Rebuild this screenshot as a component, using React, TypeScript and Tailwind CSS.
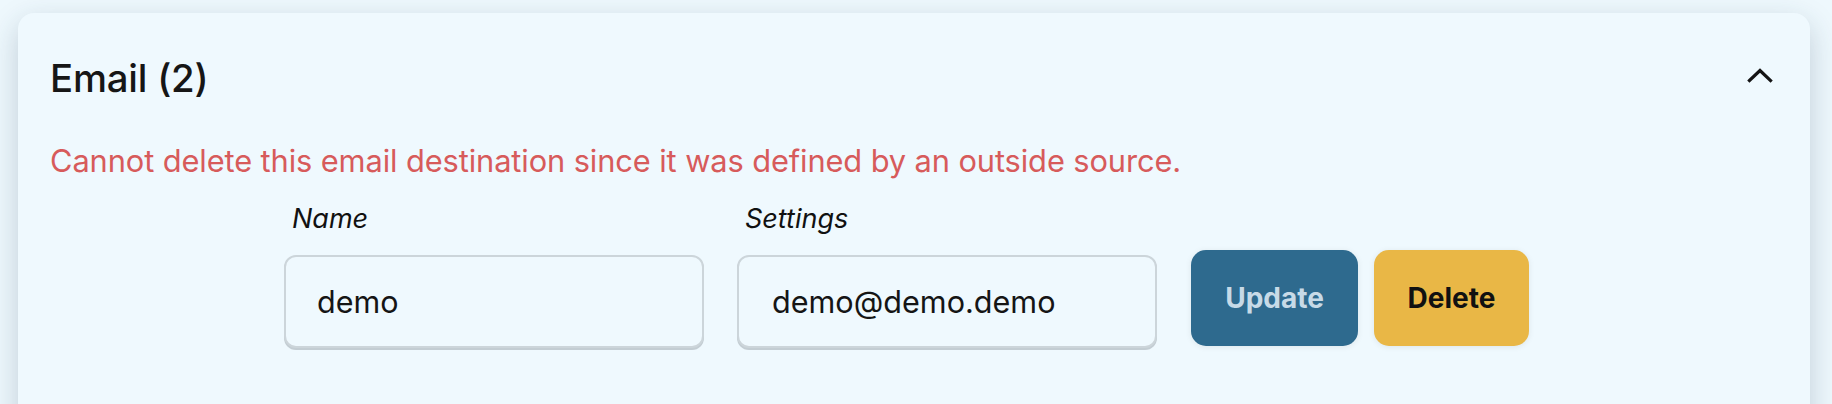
import React from "react";

export default function App() {
  return (
    <div
      className="w-[1832px] h-[404px] overflow-hidden bg-[#eef8fd]"
      style={{ fontFamily: "Inter, 'Noto Sans', sans-serif" }}
    >
      <div className="pt-[13px] pl-[18px] pr-[22px]">
        <div className="h-[440px] rounded-[16px] bg-[#eff9fe] shadow-[0_10px_30px_rgba(30,60,80,0.22)] pl-[32px] pr-[34px] pt-[42px]">
          <div className="flex items-center justify-between h-[46px]">
            <h2 className="text-[38.3px] leading-[46px] font-medium text-[#161616] tracking-[-0.2px]">
              Email (2)
            </h2>
            <svg
              width="26"
              height="16"
              viewBox="0 0 26 16"
              className="mr-[3px] -mt-[7px]"
              fill="none"
            >
              <polyline
                points="2.5,13.5 13,3.5 23.5,13.5"
                stroke="#141414"
                strokeWidth="3.2"
                strokeLinecap="square"
              />
            </svg>
          </div>
          <p className="mt-[42px] text-[30.8px] leading-[36px] text-[#d75b5b] tracking-[-0.1px]">
            Cannot delete this email destination since it was defined by an outside source.
          </p>
          <div className="mt-[24px] ml-[234px] flex items-end">
            <div className="flex flex-col w-[420px]">
              <label className="pl-[8px] text-[27px] leading-[32px] italic text-[#111]">
                Name
              </label>
              <div className="mt-[20px] h-[93px] rounded-[12px] border-2 border-[#ccd5da] shadow-[0_2px_0_#c3cdd3] bg-[#eff9fe] flex items-center pl-[31px] text-[30.5px] text-[#151515]">
                demo
              </div>
            </div>
            <div className="flex flex-col w-[420px] ml-[33px]">
              <label className="pl-[8px] text-[27px] leading-[32px] italic text-[#111]">
                Settings
              </label>
              <div className="mt-[20px] h-[93px] rounded-[12px] border-2 border-[#ccd5da] shadow-[0_2px_0_#c3cdd3] bg-[#eff9fe] flex items-center pl-[33px] text-[30.6px] text-[#151515]">
                demo@demo.demo
              </div>
            </div>
            <button className="ml-[34px] mb-[2px] w-[167px] h-[96px] rounded-[15px] bg-[#2e6a8e] text-[#c7dae7] text-[28px] font-bold shadow-[0_1px_6px_rgba(0,0,0,0.08)]">
              Update
            </button>
            <button className="ml-[16px] mb-[2px] w-[155px] h-[96px] rounded-[15px] bg-[#e9b746] text-[#111] text-[28px] font-bold shadow-[0_1px_6px_rgba(0,0,0,0.08)]">
              Delete
            </button>
          </div>
        </div>
      </div>
    </div>
  );
}
